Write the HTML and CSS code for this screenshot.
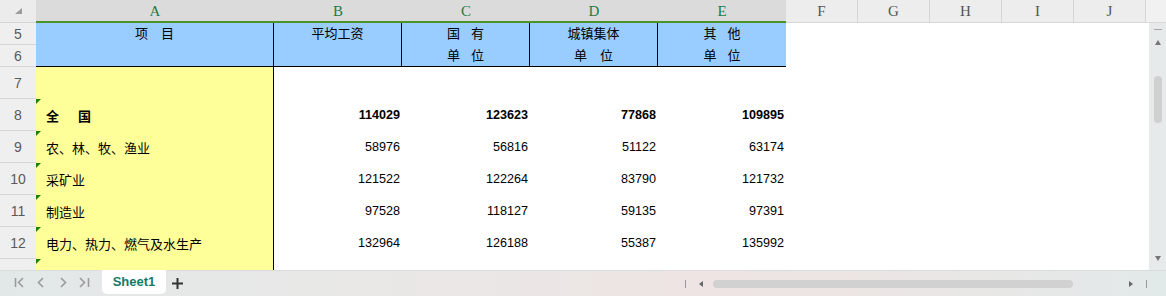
FILE: index.html
```html
<!DOCTYPE html>
<html>
<head lang="zh">
    <meta charset="UTF-8">
    <title>Sheet1</title>
    <link rel="stylesheet" href="styles.css">
</head>
<body>
<div class="app">
    <div class="main">
        <div class="grid">
            <div class="corner"><span class="corner-tri"></span></div>
            <div class="ch sel">A</div>
            <div class="ch sel">B</div>
            <div class="ch sel">C</div>
            <div class="ch sel">D</div>
            <div class="ch sel">E</div>
            <div class="ch">F</div>
            <div class="ch">G</div>
            <div class="ch">H</div>
            <div class="ch">I</div>
            <div class="ch">J</div>

            <div class="rh">5</div>
            <div class="hd a">项　目</div>
            <div class="hd">平均工资</div>
            <div class="hd">国&nbsp;&nbsp;&nbsp;有<br>单&nbsp;&nbsp;&nbsp;位</div>
            <div class="hd">城镇集体<br>单　位</div>
            <div class="hd last">其&nbsp;&nbsp;&nbsp;他<br>单&nbsp;&nbsp;&nbsp;位</div>
            <div class="rh">6</div>

            <div class="rh">7</div>
            <div class="a"></div>

            <div class="rh">8</div>
            <div class="a mark bold"><span class="wide">全　国</span></div>
            <div class="num bold">114029</div>
            <div class="num bold">123623</div>
            <div class="num bold">77868</div>
            <div class="num bold">109895</div>

            <div class="rh">9</div>
            <div class="a mark">农、林、牧、渔业</div>
            <div class="num">58976</div>
            <div class="num">56816</div>
            <div class="num">51122</div>
            <div class="num">63174</div>

            <div class="rh">10</div>
            <div class="a mark">采矿业</div>
            <div class="num">121522</div>
            <div class="num">122264</div>
            <div class="num">83790</div>
            <div class="num">121732</div>

            <div class="rh">11</div>
            <div class="a mark">制造业</div>
            <div class="num">97528</div>
            <div class="num">118127</div>
            <div class="num">59135</div>
            <div class="num">97391</div>

            <div class="rh">12</div>
            <div class="a mark">电力、热力、燃气及水生产</div>
            <div class="num">132964</div>
            <div class="num">126188</div>
            <div class="num">55387</div>
            <div class="num">135992</div>

            <div class="rh">13</div>
            <div class="a mark">交通运输、仓储和邮政业</div>
        </div>
        <div class="side">
            <div class="side-top"></div>
            <div class="vscroll">
                <span class="vdash"></span>
                <span class="tri-up"></span>
                <span class="vthumb"></span>
                <span class="tri-down"></span>
            </div>
        </div>
    </div>
    <div class="tabbar">
        <svg class="nav" width="100" height="26" viewBox="0 0 100 26">
            <g fill="none" stroke="#9b9b9b" stroke-width="1.6">
                <path d="M15.5 8v9"/>
                <path d="M23 8l-4.5 4.5L23 17"/>
                <path d="M43 8l-4.5 4.5L43 17"/>
                <path d="M61 8l4.5 4.5L61 17"/>
                <path d="M80 8l4.5 4.5L80 17"/>
                <path d="M88.5 8v9"/>
            </g>
        </svg>
        <div class="tab">Sheet1</div>
        <svg class="plus" width="11" height="11" viewBox="0 0 11 11">
            <path d="M5.5 0v11M0 5.5h11" stroke="#333" stroke-width="2"/>
        </svg>
        <div class="hscroll">
            <span class="hbar"></span>
            <span class="tri-left"></span>
            <span class="hthumb"></span>
            <span class="tri-right"></span>
            <span class="hbar"></span>
        </div>
    </div>
</div>
</body>
</html>
```

FILE: styles.css
```css
*{
    margin: 0;
    padding: 0;
    box-sizing: border-box;
}
body{
    font-family: "Liberation Sans", "Noto Sans CJK SC", sans-serif;
    font-size: 13px;
    color: #000;
    background: #fff;
}
.app{
    width: 1166px;
    height: 296px;
    display: flex;
    flex-direction: column;
    overflow: hidden;
}
.main{
    height: 270px;
    display: flex;
}
.grid{
    width: 1146px;
    height: 270px;
    overflow: hidden;
    display: grid;
    grid-template-columns: 36px 238px repeat(4, 128px) repeat(5, 72px);
    grid-template-rows: 23px 22px 22px repeat(7, 32px);
}

/* column + row headers */
.corner{
    background: #ececec;
    border-bottom: 1px solid #d6d6d6;
    display: flex;
    justify-content: flex-end;
    align-items: flex-end;
    padding: 0 14px 8px 0;
}
.corner-tri{
    width: 0;
    height: 0;
    border-left: 7px solid transparent;
    border-bottom: 6px solid #9c9c9c;
}
.ch{
    background: #ededed;
    border-right: 1px solid #d6d6d6;
    border-bottom: 1px solid #d6d6d6;
    font-family: "Liberation Serif", "DejaVu Serif", serif;
    font-size: 15px;
    color: #555;
    text-align: center;
    line-height: 23px;
}
.ch.sel{
    background: #dbdbdb;
    color: #1e7b45;
    border-right: none;
    border-bottom: 2px solid #4a922a;
    line-height: 22px;
}
.rh{
    grid-column: 1;
    background: #efefef;
    border-bottom: 1px solid #d6d6d6;
    color: #5a5a5a;
    font-size: 14px;
    display: flex;
    align-items: center;
    justify-content: center;
}

/* table header block */
.hd{
    grid-row: span 2;
    background: #99ccff;
    border-right: 1px solid #000;
    border-bottom: 1px solid #000;
    text-align: center;
    line-height: 22px;
}
.hd.last{
    border-right: none;
}

/* data */
.a{
    position: relative;
    background: #ffff99;
    border-right: 1px solid #000;
    padding-left: 10px;
    display: flex;
    align-items: center;
    white-space: nowrap;
    overflow: hidden;
}
.hd.a{
    display: block;
    padding-left: 0;
    background: #99ccff;
}
.mark::before{
    content: "";
    position: absolute;
    left: 0;
    top: 0;
    border-top: 5px solid #1a7f1a;
    border-right: 5px solid transparent;
}
.num{
    font-size: 12.6px;
    text-align: right;
    padding-right: 2px;
    display: flex;
    align-items: center;
    justify-content: flex-end;
}
.bold{
    font-weight: bold;
}
.wide{
    letter-spacing: 3px;
}

/* vertical scrollbar */
.side{
    width: 20px;
    display: flex;
    flex-direction: column;
}
.side-top{
    height: 23px;
    background: #f1f1f1;
    border-bottom: 1px solid #d8d8d8;
}
.vscroll{
    flex: 1;
    margin-left: 3px;
    background: #e7eaea;
    display: flex;
    flex-direction: column;
    align-items: center;
    padding-top: 6px;
}
.vdash{
    width: 8px;
    height: 1px;
    background: #a8a8a8;
}
.tri-up{
    margin-top: 10px;
    border-left: 3px solid transparent;
    border-right: 3px solid transparent;
    border-bottom: 5px solid #777;
}
.vthumb{
    margin-top: 31px;
    width: 8px;
    height: 47px;
    border-radius: 4px;
    background: #cfd0d0;
}
.tri-down{
    margin-top: auto;
    margin-bottom: 9px;
    border-left: 3px solid transparent;
    border-right: 3px solid transparent;
    border-top: 5px solid #777;
}

/* sheet tabs */
.tabbar{
    height: 26px;
    display: flex;
    align-items: flex-start;
    border-top: 1px solid #d9dddd;
    background: linear-gradient(90deg, #e2e8e8 0%, #e9e7e6 35%, #ede4e3 60%, #ebe5e4 75%, #e2e9e9 100%);
}
.nav{
    display: block;
    margin-top: -1px;
}
.tab{
    margin-left: 2px;
    width: 64px;
    height: 24px;
    margin-top: -1px;
    background: #fff;
    border-radius: 0 0 5px 5px;
    color: #14796a;
    font-weight: bold;
    font-size: 13px;
    text-align: center;
    line-height: 24px;
}
.plus{
    display: block;
    margin: 7px 0 0 6px;
}
.hscroll{
    margin-left: auto;
    height: 25px;
    padding-right: 19px;
    display: flex;
    align-items: center;
}
.hbar{
    width: 1px;
    height: 8px;
    background: #999;
}
.tri-left{
    margin-left: 13px;
    border-top: 3px solid transparent;
    border-bottom: 3px solid transparent;
    border-right: 4px solid #666;
}
.hthumb{
    margin-left: 10px;
    width: 360px;
    height: 8px;
    border-radius: 4px;
    background: #d1d1d1;
}
.tri-right{
    margin-left: 56px;
    margin-right: 13px;
    border-top: 3px solid transparent;
    border-bottom: 3px solid transparent;
    border-left: 4px solid #666;
}
```
